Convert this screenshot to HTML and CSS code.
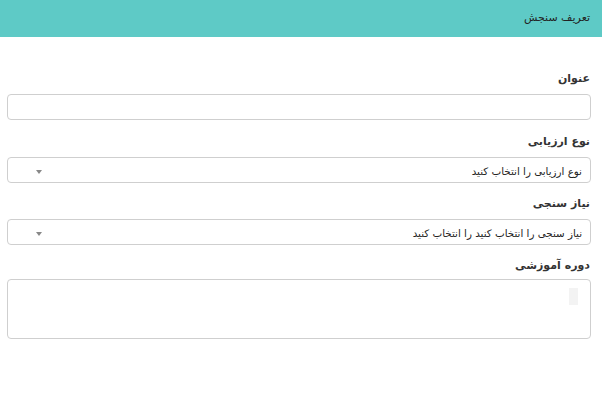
FILE: index.html
```html
<!DOCTYPE html>
<html lang="fa" dir="rtl">
<head>
<meta charset="utf-8">
<link rel="stylesheet" href="styles.css">
</head>
<body>
<header class="topbar"><span class="title">تعریف سنجش</span></header>
<form class="form">
  <div class="group">
    <label class="label">عنوان</label>
    <input class="field" type="text">
  </div>
  <div class="group group-tight">
    <label class="label">نوع ارزیابی</label>
    <div class="field select"><span>نوع ارزیابی را انتخاب کنید</span><i class="caret"></i></div>
  </div>
  <div class="group group-tight">
    <label class="label">نیاز سنجی</label>
    <div class="field select"><span>نیاز سنجی را انتخاب کنید را انتخاب کنید</span><i class="caret"></i></div>
  </div>
  <div class="group group-last">
    <label class="label">دوره آموزشی</label>
    <div class="field area"><i class="chip"></i></div>
  </div>
</form>
</body>
</html>
```
FILE: styles.css
```css
* { box-sizing: border-box; }
html, body { margin: 0; padding: 0; background: #fff; }
body {
  font-family: "DejaVu Sans", "Noto Sans", sans-serif;
  font-size: 11px;
  color: #333;
  width: 602px;
}
.topbar {
  height: 37px;
  background: #5ecac6;
  display: flex;
  align-items: center;
  padding: 0 12px 2px;
}
.title { font-size: 11px; color: #222; }
.form {
  padding: 32px 11px 0 7px;
  display: flex;
  flex-direction: column;
}
.group { display: flex; flex-direction: column; gap: 5px; margin-bottom: 12px; }
.group-tight { margin-bottom: 11px; }
.group-last { gap: 3px; }
.label {
  display: block;
  height: 20px;
  line-height: 20px;
  font-weight: bold;
  padding-right: 1px;
  color: #333;
}
.field {
  display: block;
  width: 100%;
  height: 26px;
  border: 1px solid #cfcfcf;
  border-radius: 4px;
  background: #fff;
  font: inherit;
  outline: none;
}
.select {
  display: flex;
  align-items: center;
  justify-content: space-between;
  padding: 2px 8px 0 28px;
  color: #222;
  font-size: 10.3px;
}
.caret {
  width: 0; height: 0;
  border-left: 3.5px solid transparent;
  border-right: 3.5px solid transparent;
  border-top: 4px solid #888;
  margin-top: 2px;
}
.area {
  height: 60px;
  padding: 8px 12px 0 0;
}
.chip {
  display: block;
  width: 9px;
  height: 17px;
  background: #f3f3f3;
}
```
